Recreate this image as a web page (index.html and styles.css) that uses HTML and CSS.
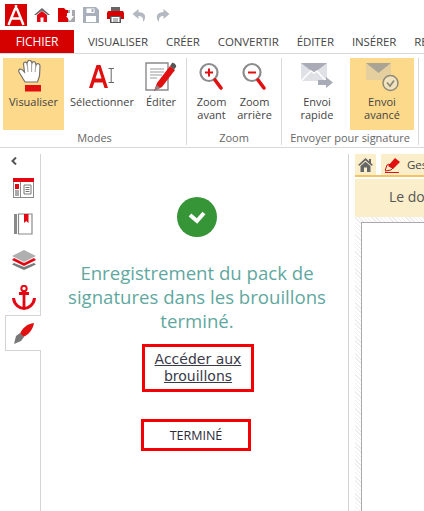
FILE: index.html
```html
<!DOCTYPE html>
<html lang="fr">
<head>
    <meta charset="UTF-8">
    <meta name="viewport" content="width=device-width, initial-scale=1.0">
    <title>Envoi avancé</title>
    <link rel="stylesheet" href="styles.css">
</head>
<body>
    <div class="app">
        <!-- quick access -->
        <div class="quick-bar">
            <svg class="logo" width="22" height="22" viewBox="0 0 22 22"><rect width="22" height="22" fill="#d90000"/><path d="M11 1 V4 M3.500 21 L10 5 H12 L18.500 21 M6.500 14.500 H15.500" stroke="#fff" stroke-width="2.400" fill="none"/></svg>
            <svg width="16" height="16" viewBox="0 0 16 16"><path d="M0 8 L8 1 L16 8 L14 8 L8 3.500 L2 8Z" fill="#666"/><path d="M3 8 L8 4 L13 8 V15 H9.500 V10.500 H6.500 V15 H3Z" fill="#e30613"/></svg>
            <svg width="17" height="16" viewBox="0 0 17 16"><path d="M0 1 H6 L8 3 H16 V15 H0Z" fill="#d90000"/><path d="M10 3 H17 V15 H10Z" fill="#a8a8ac"/><path d="M9 6 H12 V3 H14 V9 H16 L12 14 L8 9 H9Z" fill="#fff"/></svg>
            <svg width="16" height="16" viewBox="0 0 16 16"><path d="M0 0 H13 L16 3 V16 H0Z" fill="#a9afbb"/><rect x="3.500" y="1.500" width="8" height="4.500" fill="#fff"/><rect x="3" y="9" width="10" height="6" fill="#fff"/><rect x="8.500" y="2" width="2" height="3" fill="#a9afbb"/></svg>
            <svg width="17" height="16" viewBox="0 0 17 16"><rect x="4" y="0" width="9" height="4" fill="#666"/><path d="M1 4 H16 L17 6 V12 H0 V6Z" fill="#d90000"/><rect x="3" y="9" width="11" height="7" fill="#555"/><rect x="4.500" y="10" width="8" height="5" fill="#fff"/><path d="M6 12 H11 M6 14 H11" stroke="#777"/></svg>
            <svg width="15" height="15" viewBox="0 0 15 15"><path d="M6.500 1 L0.500 6 L6.500 11 V8 C10 8 11.500 10 11 14 C14 11 15 4.500 6.500 4Z" fill="#b4b8c0"/></svg>
            <svg width="15" height="15" viewBox="0 0 15 15"><path d="M8.500 1 L14.500 6 L8.500 11 V8 C5 8 3.500 10 4 14 C1 11 0 4.500 8.500 4Z" fill="#b4b8c0"/></svg>
        </div>

        <!-- tabs -->
        <div class="tab-bar">
            <span class="tab tab-file">FICHIER</span>
            <span class="tab">VISUALISER</span>
            <span class="tab">CRÉER</span>
            <span class="tab">CONVERTIR</span>
            <span class="tab">ÉDITER</span>
            <span class="tab">INSÉRER</span>
            <span class="tab">RÉVISER</span>
        </div>

        <!-- ribbon -->
        <div class="ribbon">
            <div class="group group-modes">
                <div class="group-items">
                    <div class="rb-btn active btn-view">
                        <svg width="26" height="32" viewBox="0 0 26 32"><path d="M7 22 L1 12 C0 9 3 8 5 10.500 L6.500 12 L5.500 4 C5.500 1.500 8.500 1.500 9 3.500 L9.500 1.800 C10 -0.200 13 -0.200 13.500 2 L14 3 C14.500 1 17.500 1 17.500 3.500 L18 5 C18.500 3 22 3 22 6 L21.500 16 L19.500 22Z" fill="#fff" stroke="#77736a" stroke-width="1.200"/><path d="M9.300 4 L10 12 M13.600 3 V12 M17.700 5 L17.200 12" stroke="#a5a299"/><rect x="7" y="25" width="16" height="6.500" fill="#e01010"/></svg>
                        <span>Visualiser</span>
                    </div>
                    <div class="rb-btn btn-select">
                        <svg width="26" height="32" viewBox="0 0 26 32"><path fill-rule="evenodd" d="M0 28 L7.500 5 H11.500 L19 28 H15.500 L13.700 22.500 H5.300 L3.500 28Z M6.500 18.500 H12.500 L9.500 9Z" fill="#e01010"/><path d="M19.500 8.500 H25 M19.500 22.500 H25 M22.200 8.500 V22.500" stroke="#666" fill="none"/></svg>
                        <span>Sélectionner</span>
                    </div>
                    <div class="rb-btn btn-edit">
                        <svg width="32" height="32" viewBox="0 0 32 32"><path d="M1 3 H23 V30 H1Z" fill="#fff" stroke="#8a8a8a" stroke-width="1.400"/><path d="M5 9 H19 M5 12 H19 M5 15 H17 M5 18 H12" stroke="#999"/><path d="M9 31 L12 23 L25 6 L30 10 L17 27Z" fill="#e01010"/><path d="M25 6 L27 3 C28 2 32 5 31 7 L29 9.500Z" fill="#555"/><path d="M9 31 L12 25 L15 28Z" fill="#888"/></svg>
                        <span>Éditer</span>
                    </div>
                </div>
                <div class="group-name">Modes</div>
            </div>
            <div class="group group-zoom">
                <div class="group-items">
                    <div class="rb-btn btn-zoom">
                        <svg width="26" height="32" viewBox="0 0 26 32"><circle cx="10" cy="12.500" r="8.500" fill="#fff" stroke="#8c8c8c" stroke-width="2.200"/><path d="M6 12.500 H14 M10 8.500 V16.500" stroke="#e01010" stroke-width="2"/><path d="M16 20 L22 28" stroke="#e01010" stroke-width="3.600" stroke-linecap="round"/></svg>
                        <span>Zoom<br>avant</span>
                    </div>
                    <div class="rb-btn btn-zoom btn-zoom-out">
                        <svg width="26" height="32" viewBox="0 0 26 32"><circle cx="10" cy="12.500" r="8.500" fill="#fff" stroke="#8c8c8c" stroke-width="2.200"/><path d="M6 12.500 H14" stroke="#e01010" stroke-width="2"/><path d="M16 20 L22 28" stroke="#e01010" stroke-width="3.600" stroke-linecap="round"/></svg>
                        <span>Zoom<br>arrière</span>
                    </div>
                </div>
                <div class="group-name">Zoom</div>
            </div>
            <div class="group group-send">
                <div class="group-items">
                    <div class="rb-btn btn-send">
                        <svg width="32" height="32" viewBox="0 0 32 32"><rect y="3" width="26" height="18" fill="#dfe1e6"/><path d="M0 3 H26 L13 13Z" fill="#a9acb7"/><path d="M0 21 L10 11 L13 13 L16 11 L25 21" fill="none" stroke="#fff" stroke-width="1.500"/><path d="M17 20 H25 V17 L32 22.500 L25 28 V25 H17Z" fill="#a9acb7"/></svg>
                        <span>Envoi<br>rapide</span>
                    </div>
                    <div class="rb-btn active btn-send-adv">
                        <svg width="33" height="32" viewBox="0 0 33 32"><rect y="3" width="25" height="17" fill="#e6cf9f"/><path d="M0 3 H25 L12.500 13Z" fill="#a9a493"/><circle cx="24.500" cy="23" r="7.500" fill="#f2e3bf" stroke="#8f8a78" stroke-width="1.500"/><path d="M21 22.500 L24 26 L28 20.500" fill="none" stroke="#8f8a78" stroke-width="1.800"/></svg>
                        <span>Envoi<br>avancé</span>
                    </div>
                </div>
                <div class="group-name">Envoyer pour signature</div>
            </div>
        </div>

        <div class="main">
            <!-- left tool tabs -->
            <div class="side">
                <div class="side-top">
                    <svg class="side-back" width="6" height="8" viewBox="0 0 6 8"><path d="M5 0.500 L1.500 4 L5 7.500" fill="none" stroke="#555" stroke-width="2"/></svg>
                    <svg width="21" height="20" viewBox="0 0 21 20"><rect width="21" height="20" fill="#8a8a8a"/><rect x="1" y="4" width="19" height="15" fill="#fff"/><rect width="21" height="4" fill="#e30613"/><rect x="2" y="6" width="4" height="5" fill="#e30613"/><rect x="2" y="12" width="4" height="6" fill="#aaa"/><path d="M7.500 4 V19" stroke="#8a8a8a"/><path d="M11 7 H18 V16 H11Z M12.500 9.500 H16.500 M12.500 11.500 H16.500 M12.500 13.500 H16.500" fill="none" stroke="#777"/></svg>
                    <svg width="19" height="22" viewBox="0 0 19 22"><rect y="1" width="3" height="20" fill="#8a8a8a"/><path d="M4.500 1 H18 V21 H4.500Z" fill="#fff" stroke="#8a8a8a" stroke-width="1.200"/><path d="M10 1 H14.500 V10 L12.200 8 L10 10Z" fill="#e30613"/></svg>
                    <svg width="24" height="20" viewBox="0 0 24 20"><path d="M12 0 L24 6 L12 12 L0 6Z" fill="#b0b0b0"/><path d="M2 8 L12 13 L22 8 L24 10 L12 16 L0 10Z" fill="#e30613"/><path d="M2 13 L12 17 L22 13 L24 14.500 L12 20 L0 14.500Z" fill="#777"/></svg>
                    <svg width="24" height="25" viewBox="0 0 24 25"><circle cx="12" cy="3.500" r="2.700" fill="none" stroke="#e30613" stroke-width="2"/><path d="M7 8.500 H17 M12 6 V23" stroke="#e30613" stroke-width="2.800"/><path d="M1.500 13 C2 20 8 23.500 12 23.500 C16 23.500 22 20 22.500 13" fill="none" stroke="#e30613" stroke-width="3"/></svg>
                </div>
                <div class="side-active">
                    <svg width="20" height="21" viewBox="0 0 20 21"><path d="M6 11 C8 5 13 1 20 0 C19 6 15 12 9 14Z" fill="#e01010"/><path d="M0 21 L2 13 L6 10 L10 14 L7 18Z" fill="#777"/></svg>
                </div>
                <div class="side-rest"></div>
            </div>

            <!-- confirmation -->
            <div class="content">
                <div class="check">
                    <svg width="18" height="14" viewBox="0 0 18 14"><path d="M2 5 L9 11 L16 3" fill="none" stroke="#fff" stroke-width="4"/></svg>
                </div>
                <p class="message">Enregistrement du pack de signatures dans les brouillons terminé.</p>
                <a class="link-box" href="#">Accéder aux brouillons</a>
                <button class="done" type="button">TERMINÉ</button>
            </div>

            <!-- document panel -->
            <div class="doc-panel">
                <div class="doc-tabs">
                    <span class="doc-tab doc-tab-home">
                        <svg width="15" height="14" viewBox="0 0 15 14"><path d="M0 7 L7.500 0 L11 3.200 V1 H13 V5 L15 7 L13.500 7.800 L7.500 2.500 L1.500 7.800Z M2.500 8 L7.500 3.800 L12.500 8 V14 H9 V9.500 H6 V14 H2.500Z" fill="#666"/></svg>
                    </span>
                    <span class="doc-tab doc-tab-doc">
                        <svg width="16" height="16" viewBox="0 0 16 16"><path d="M3 9 L10 1 L15 5 L8 12Z" fill="#e01010"/><path d="M0 14 L2 8 L4 7 L8 11 L6 13Z" fill="none" stroke="#d01010"/><path d="M0 15.500 H14" stroke="#e01010"/></svg>
                        Gestion
                    </span>
                </div>
                <div class="doc-banner">Le document</div>
                <div class="doc-hatch">
                    <div class="doc-page"></div>
                </div>
            </div>
        </div>
    </div>
</body>
</html>
```

FILE: styles.css
```css
html, body {
    margin: 0;
    padding: 0;
    background-color: white;
}
body {
    font-family: "Open Sans", "Liberation Sans", sans-serif;
    color: #444;
    overflow: hidden;
}
.app {
    width: 424px;
    height: 511px;
    display: flex;
    flex-direction: column;
    overflow: hidden;
}
.quick-bar {
    height: 30px;
    display: flex;
    align-items: center;
    gap: 8px;
    padding-left: 5px;
    box-sizing: border-box;
    flex-shrink: 0;
}
.quick-bar .logo {
    margin-right: -1px;
}
.tab-bar {
    height: 24px;
    display: flex;
    align-items: center;
    border-bottom: 1px solid #d9d9d9;
    box-sizing: border-box;
    font-size: 11.5px;
    color: #444;
    flex-shrink: 0;
    white-space: nowrap;
    overflow: hidden;
}
.tab {
    margin-right: 18px;
    letter-spacing: -0.1px;
    flex-shrink: 0;
}
.tab-file {
    background-color: #d50000;
    color: white;
    width: 74px;
    height: 23px;
    line-height: 23px;
    margin-right: 14px;
    text-align: center;
    font-size: 12px;
}
.ribbon {
    height: 94px;
    display: flex;
    border-bottom: 1px solid #d9d9d9;
    box-sizing: border-box;
    padding-top: 4px;
    flex-shrink: 0;
}
.group {
    display: flex;
    flex-direction: column;
    border-right: 1px solid #d9d9d9;
    box-sizing: border-box;
    height: 87px;
}
.group-modes {
    width: 187px;
    padding-left: 3px;
}
.group-zoom {
    width: 95px;
}
.group-send {
    width: 137px;
}
.group-items {
    display: flex;
    height: 73px;
}
.group-name {
    text-align: center;
    font-size: 11px;
    line-height: 14px;
    color: #666;
    white-space: nowrap;
}
.rb-btn {
    display: flex;
    flex-direction: column;
    align-items: center;
    font-size: 11px;
    line-height: 13px;
    text-align: center;
    color: #444;
    white-space: nowrap;
    padding-top: 2px;
    box-sizing: border-box;
    height: 72px;
}
.rb-btn svg {
    margin-bottom: 3px;
}
.active {
    background-color: #fdd98b;
}
.btn-view {
    width: 61px;
}
.btn-view svg {
    margin-right: 5px;
}
.btn-select {
    width: 76px;
}
.btn-edit {
    width: 42px;
}
.btn-zoom {
    width: 45px;
}
.btn-zoom-out {
    width: 41px;
}
.group-zoom .group-items {
    padding-left: 2px;
}
.btn-send {
    width: 68px;
    padding-left: 2px;
}
.btn-send-adv {
    width: 64px;
}
.main {
    flex: 1;
    display: flex;
    padding-top: 6px;
    min-height: 0;
}
.side {
    width: 41px;
    display: flex;
    flex-direction: column;
    flex-shrink: 0;
}
.side-top {
    height: 161px;
    border-right: 1px solid #d4d4d4;
    box-sizing: border-box;
    display: flex;
    flex-direction: column;
    align-items: center;
    padding: 3px 0 0 7px;
    gap: 15px;
}
.side-back {
    margin: 0 19px -2px 0;
}
.side-active {
    width: 36px;
    height: 36px;
    margin-left: 5px;
    box-sizing: border-box;
    border: 1px solid #d4d4d4;
    border-right: none;
    display: flex;
    align-items: center;
    justify-content: center;
    flex-shrink: 0;
}
.side-rest {
    flex: 1;
    border-right: 1px solid #d4d4d4;
}
.content {
    width: 307px;
    flex-shrink: 0;
    display: flex;
    flex-direction: column;
    align-items: center;
    padding: 43px 0 0 5px;
    box-sizing: border-box;
}
.check {
    width: 40px;
    height: 40px;
    border-radius: 50%;
    background-color: #359537;
    display: flex;
    align-items: center;
    justify-content: center;
    flex-shrink: 0;
}
.message {
    margin: 24px 0 0;
    width: 280px;
    text-align: center;
    font-size: 18.6px;
    line-height: 24px;
    color: #5fa8a0;
}
.link-box {
    margin: 11px 0 0 2px;
    width: 112px;
    height: 48px;
    border: 3px solid #f50000;
    box-sizing: border-box;
    text-align: center;
    font-family: "DejaVu Sans", sans-serif;
    font-size: 14px;
    line-height: 17px;
    padding-top: 4px;
    color: #3a3a4a;
}
.done {
    margin: 27px 2px 0 0;
    width: 110px;
    height: 32px;
    border: 3px solid #f50000;
    background-color: white;
    font-family: "Open Sans", sans-serif;
    font-size: 12.5px;
    color: #2a2a3a;
    padding: 0;
}
.doc-panel {
    flex: 1;
    border-left: 1px solid #d4d4d4;
    padding-left: 6px;
    display: flex;
    flex-direction: column;
    min-width: 0;
    white-space: nowrap;
    overflow: hidden;
}
.doc-tabs {
    height: 23px;
    display: flex;
    gap: 5px;
    border-bottom: 2px solid #f4c25e;
    box-sizing: border-box;
    flex-shrink: 0;
}
.doc-tab {
    background-color: #fbeecb;
    height: 21px;
    display: flex;
    align-items: center;
    font-size: 11.5px;
    color: #444;
}
.doc-tab svg {
    flex-shrink: 0;
}
.doc-tab-home {
    width: 21px;
    justify-content: center;
    flex-shrink: 0;
}
.doc-tab-doc {
    flex: 1;
    padding-left: 4px;
    gap: 6px;
    min-width: 0;
}
.doc-banner {
    margin-top: 2px;
    height: 38px;
    line-height: 36px;
    padding-left: 34px;
    background-color: #fbeecb;
    font-size: 14px;
    color: #555;
    flex-shrink: 0;
}
.doc-hatch {
    flex: 1;
    padding: 5px 0 0 6px;
    background: repeating-linear-gradient(45deg, #eee, #eee 1px, #fff 1px, #fff 3px);
}
.doc-page {
    height: 100%;
    background-color: white;
    border-left: 1px solid #aaa;
    border-top: 1px solid #aaa;
}
```
